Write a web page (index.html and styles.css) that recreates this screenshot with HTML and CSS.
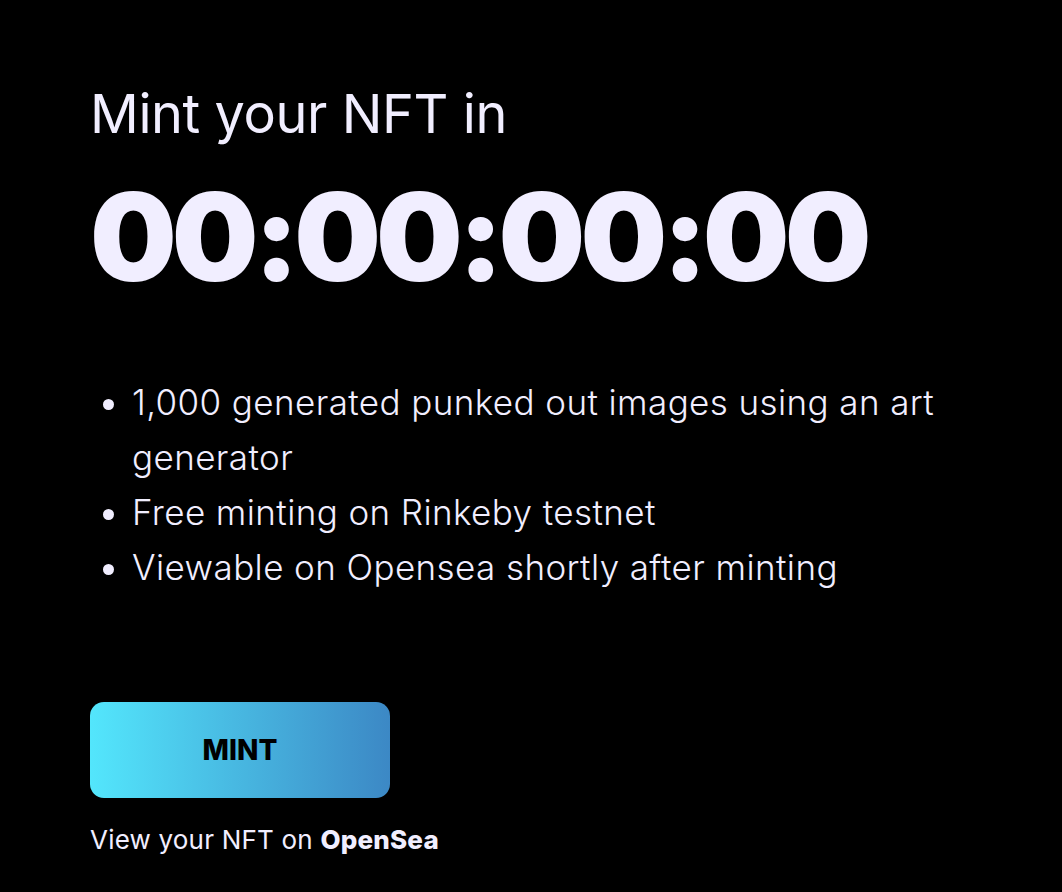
FILE: index.html
```html
<!DOCTYPE html>
<html>
<head>
<meta charset="utf-8">
<link rel="stylesheet" href="styles.css">
</head>
<body>
<main class="page">
  <h1 class="title">Mint your NFT in</h1>
  <div class="timer">00:00:00:00</div>
  <ul class="features">
    <li>1,000 generated punked out images using an art generator</li>
    <li>Free minting on Rinkeby testnet</li>
    <li>Viewable on Opensea shortly after minting</li>
  </ul>
  <button class="mint">MINT</button>
  <p class="view">View your NFT on <a class="link" href="#">OpenSea</a></p>
</main>
</body>
</html>
```

FILE: styles.css
```css
html, body {
  margin: 0;
  padding: 0;
  background: #000;
}
body {
  font-family: "Inter", "Noto Sans", sans-serif;
  color: #f1eeff;
}
.page {
  padding: 82px 90px 0 90px;
  display: flex;
  flex-direction: column;
  align-items: flex-start;
}
.title {
  margin: 0;
  font-size: 54px;
  font-weight: 400;
  line-height: 64px;
  letter-spacing: -0.4px;
}
.timer {
  margin-top: 21px;
  font-size: 122px;
  font-weight: 900;
  line-height: 140px;
  letter-spacing: -4.9px;
}
.features {
  margin: 68px 0 0 0;
  padding-left: 42px;
  width: 820px;
  font-size: 35px;
  line-height: 55px;
  font-weight: 300;
  letter-spacing: 0.4px;
}
.mint {
  margin-top: 107px;
  width: 300px;
  height: 96px;
  border: none;
  border-radius: 14px;
  background: linear-gradient(90deg, #53e6fc 0%, #3c88c5 100%);
  font-family: inherit;
  font-size: 28px;
  font-weight: 800;
  color: #000;
  cursor: pointer;
}
.view {
  margin: 27px 0 0 0;
  font-size: 26px;
  line-height: 30px;
  letter-spacing: 0.2px;
}
.link {
  color: inherit;
  text-decoration: none;
  font-weight: 800;
}
```
